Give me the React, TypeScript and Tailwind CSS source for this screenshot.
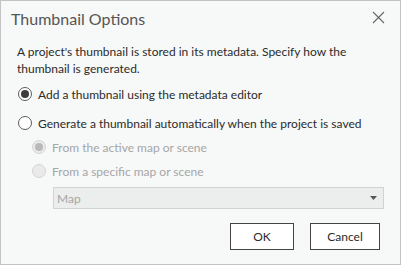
import React, { useState } from 'react';

function Radio({ checked, disabled }: { checked: boolean; disabled?: boolean }) {
  return (
    <span
      className={`flex h-[14px] w-[14px] shrink-0 items-center justify-center rounded-full border ${
        disabled ? 'border-[#d4d4d4] bg-[#eaeaea]' : 'border-[#5c5c5c] bg-white'
      }`}
    >
      {checked && (
        <span className={`h-[8px] w-[8px] rounded-full ${disabled ? 'bg-[#b9b9b9]' : 'bg-[#3c3c3c]'}`} />
      )}
    </span>
  );
}

function Option({ label, checked, disabled, onClick }: { label: string; checked: boolean; disabled?: boolean; onClick?: () => void }) {
  return (
    <label className="flex h-[24px] items-center gap-[6px] whitespace-nowrap cursor-default" onClick={onClick}>
      <Radio checked={checked} disabled={disabled} />
      <span className={disabled ? 'text-[#a6a6a6]' : 'text-[#2b2b2b]'}>{label}</span>
    </label>
  );
}

export default function App() {
  const [mode, setMode] = useState<'editor' | 'auto'>('editor');
  const auto = mode === 'auto';

  return (
    <div className="h-[266px] w-[402px] bg-white" style={{ fontFamily: 'Lato, "Noto Sans", sans-serif' }}>
      <div className="flex h-[265px] w-[401px] flex-col border border-[#c3c3c3] bg-[#f7f8f8] text-[12px] leading-[17px]">
        {/* Header */}
        <div className="flex items-start justify-between pl-[10px] pr-[15px] pt-[6px]">
          <h1 className="text-[16px] leading-[24px] text-[#555]">Thumbnail Options</h1>
          <button className="mt-[4px] text-[#666]" aria-label="Close">
            <svg width="13" height="13" viewBox="0 0 13 13" fill="none" stroke="currentColor" strokeWidth="1.1">
              <path d="M1 1 L12 12 M12 1 L1 12" />
            </svg>
          </button>
        </div>

        <p className="mt-[12px] px-[16px] text-[#2b2b2b]">
          A project's thumbnail is stored in its metadata. Specify how the thumbnail is generated.
        </p>

        {/* Options */}
        <div className="mt-[5px] flex flex-col pl-[17px] pr-[16px]">
          <Option label="Add a thumbnail using the metadata editor" checked={!auto} onClick={() => setMode('editor')} />
          <div className="h-[5px]" />
          <Option label="Generate a thumbnail automatically when the project is saved" checked={auto} onClick={() => setMode('auto')} />
          <div className="pl-[14px]">
            <Option label="From the active map or scene" checked disabled={!auto} />
            <Option label="From a specific map or scene" checked={false} disabled={!auto} />
          </div>
          <div className="ml-[35px] mt-[4px] flex h-[22px] items-center justify-between border border-[#d2d2d2] bg-[#eceded] pl-[3px] pr-[6px] text-[#a6a6a6]">
            <span>Map</span>
            <svg width="7" height="4" viewBox="0 0 7 4" className="text-[#555]">
              <path d="M0 0 H7 L3.5 4 Z" fill="currentColor" />
            </svg>
          </div>
        </div>

        {/* Footer */}
        <div className="mt-[14px] flex justify-end gap-[16px] pr-[20px]">
          <button className="h-[27px] w-[64px] border border-[#444] bg-white text-[#2b2b2b]">OK</button>
          <button className="h-[27px] w-[70px] border border-[#444] bg-white text-[#2b2b2b]">Cancel</button>
        </div>
      </div>
    </div>
  );
}
